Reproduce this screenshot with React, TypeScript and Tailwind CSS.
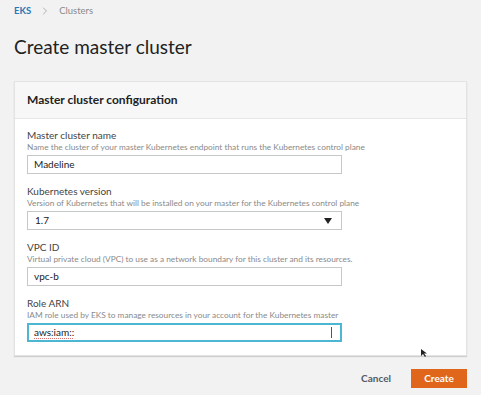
import { ChevronRight } from 'lucide-react';

type FieldProps = {
  label: string;
  hint: string;
  children: React.ReactNode;
  first?: boolean;
};

function Field({ label, hint, children, first }: FieldProps) {
  return (
    <div className={first ? '' : 'mt-[10px]'}>
      <div className="h-[14px] text-[10px] leading-[14px] text-[#444]">{label}</div>
      <div className="h-[11px] text-[8.3px] leading-[11px] text-[#8a8a8a]">{hint}</div>
      <div className="mt-[2px]">{children}</div>
    </div>
  );
}

export default function App() {
  return (
    <div
      className="relative h-[395px] w-[481px] overflow-hidden bg-[#f2f2f2] px-[14px]"
      style={{ fontFamily: 'Lato, "Open Sans", sans-serif' }}
    >
      <div className="flex h-[22px] items-center gap-[8px] text-[9.5px]">
        <span className="font-bold text-[#2a7ab8]">EKS</span>
        <ChevronRight className="h-[12px] w-[12px] text-[#9a9a9a]" strokeWidth={1.5} />
        <span className="text-[#8a8a8a]">Clusters</span>
      </div>
      <div className="flex h-[50px] items-center text-[19px] text-[#222]">
        Create master cluster
      </div>

      <div className="mt-[9px] border border-[#e3e3e3] bg-white shadow-[0_1px_1px_rgba(0,0,0,0.15)]">
        <div className="flex h-[37px] items-center border-b border-[#e6e6e6] bg-[#f7f7f7] pl-[12px] text-[12px] font-bold text-[#222]">
          Master cluster configuration
        </div>
        <div className="px-[12px] pt-[9px] pb-[13px]">
          <Field
            first
            label="Master cluster name"
            hint="Name the cluster of your master Kubernetes endpoint that runs the Kubernetes control plane"
          >
            <div className="flex h-[19px] w-[315px] items-center border border-[#c4c8c8] px-[6px] text-[10px] text-[#222]">
              Madeline
            </div>
          </Field>
          <Field
            label="Kubernetes version"
            hint="Version of Kubernetes that will be installed on your master for the Kubernetes control plane"
          >
            <div className="flex h-[19px] w-[315px] items-center justify-between border border-[#c4c8c8] pr-[9px] pl-[7px] text-[10px] text-[#222]">
              <span>1.7</span>
              <svg width="8" height="6" viewBox="0 0 8 6">
                <path d="M0 0 L8 0 L4 6 Z" fill="#222" />
              </svg>
            </div>
          </Field>
          <Field
            label="VPC ID"
            hint="Virtual private cloud (VPC) to use as a network boundary for this cluster and its resources."
          >
            <div className="flex h-[19px] w-[315px] items-center border border-[#c4c8c8] px-[6px] text-[10px] text-[#222]">
              vpc-b
            </div>
          </Field>
          <Field
            label="Role ARN"
            hint="IAM role used by EKS to manage resources in your account for the Kubernetes master"
          >
            <div className="flex h-[19px] w-[315px] items-center justify-between border-2 border-[#4db7d3] pr-[8px] pl-[5px] text-[10px] text-[#222]">
              <span className="underline decoration-[#e07070] decoration-dotted underline-offset-2">
                aws:iam::
              </span>
              <span className="h-[11px] w-px bg-[#555]" />
            </div>
          </Field>
        </div>
      </div>

      <div className="mt-[13px] flex items-center justify-end">
        <span className="mr-[20px] text-[10px] font-bold text-[#545b64]">Cancel</span>
        <div className="flex h-[19px] w-[56px] items-center justify-center bg-[#e0661b] text-[10px] font-bold text-white">
          Create
        </div>
      </div>

      <svg className="absolute top-[349px] left-[421px]" width="6" height="8" viewBox="0 0 6 8">
        <path d="M0 0 L0 7 L2 5 L4 8 L5 7 L3 4.5 L6 4.5 Z" fill="#222" />
      </svg>
    </div>
  );
}
